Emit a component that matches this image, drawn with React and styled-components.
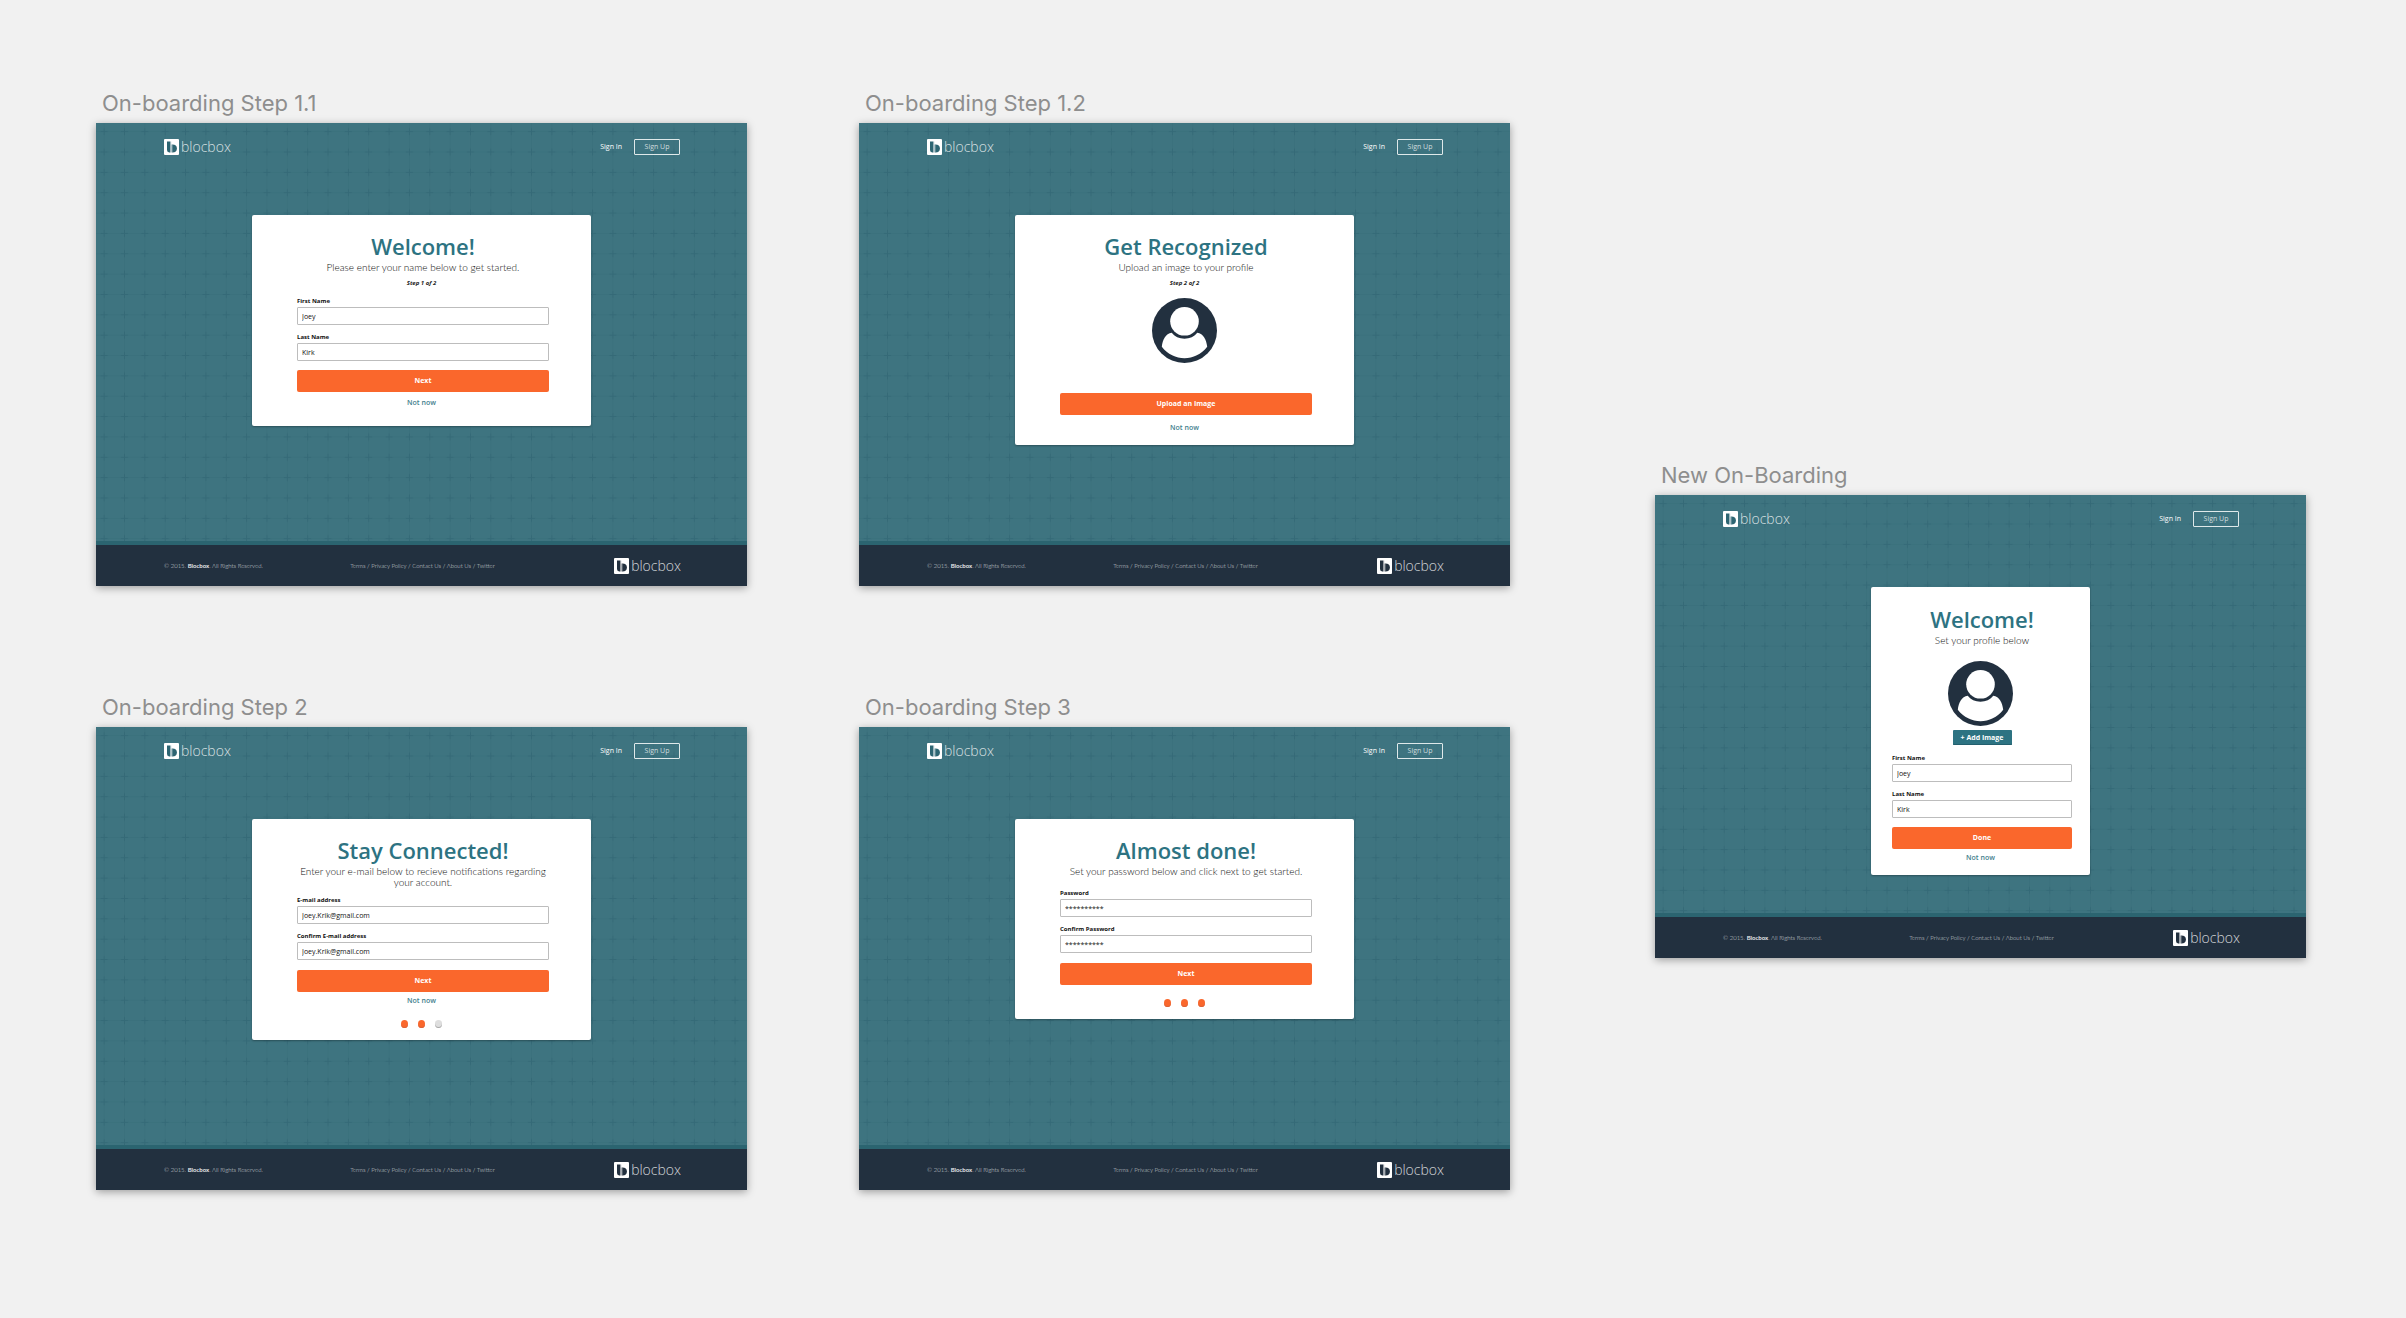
import React, { useId } from "react";
import styled, { createGlobalStyle } from "styled-components";

const open = '"Open Sans", "Noto Sans", sans-serif';
const light = 'Lato, "Open Sans", sans-serif';
const teal = "#2d7382";
const navy = "#22303f";
const orange = "#fa672c";

const Global = createGlobalStyle`
  *, *::before, *::after { box-sizing: border-box; }
  body { margin: 0; background: #f1f1f1; font-family: ${open}; }
  h1, h2, p { margin: 0; }
  a { color: inherit; text-decoration: none; }
  button, input { font: inherit; margin: 0; }
`;

const Canvas = styled.main`
  display: grid;
  grid-template-columns: 1fr 112px 1fr 145px 1fr;
  row-gap: 106px;
  padding: 88px 100px 127px 96px;
`;

const Board = styled.section`
  grid-column: ${(p) => p.$column};
  grid-row: ${(p) => p.$row};
  min-width: 0;
  margin-top: ${(p) => (p.$lowered ? "372px" : "0")};
`;

const BoardTitle = styled.h1`
  margin-bottom: 5px;
  padding-left: 6px;
  font: 400 22px/30px Inter, sans-serif;
  color: #8e8e8e;
`;

const Artboard = styled.div`
  position: relative;
  display: flex;
  flex-direction: column;
  min-height: 463px;
  background: #3e7480;
  box-shadow: 0 2px 8px rgba(0, 0, 0, 0.35);
`;

const PatternLayer = styled.svg`
  position: absolute;
  inset: 0;
  width: 100%;
  height: 100%;
`;

const TopBar = styled.header`
  position: relative;
  display: flex;
  justify-content: space-between;
  align-items: center;
  padding: 16px 67px 0 68px;
`;

const Brand = styled.a`
  display: flex;
  align-items: center;
  gap: 2px;
  height: 16px;
  font: 300 14px/16px ${open};
  color: rgba(255, 255, 255, 0.8);

  svg {
    width: 15px;
    height: 16px;
  }
`;

const Account = styled.nav`
  display: flex;
  align-items: center;
  gap: 12px;
  font: 400 7px/14px ${open};
  color: #fff;
`;

const SignUp = styled.button`
  width: 46px;
  height: 16px;
  padding: 0;
  border: 1px solid #dfe9ea;
  border-radius: 1px;
  background: transparent;
  color: #d0dddf;
  font-weight: 400;
`;

const Stage = styled.div`
  position: relative;
  display: flex;
  flex: 1;
  justify-content: center;
  align-items: flex-start;
  padding: 60px 20px 20px;
`;

const Card = styled.form`
  display: flex;
  flex-direction: column;
  width: ${(p) => (p.$narrow ? "219px" : "339px")};
  padding: ${(p) => (p.$narrow ? "19px 18px 12px 21px" : "18px 42px 12px 45px")};
  padding-bottom: ${(p) => (p.$roomy ? "18px" : "12px")};
  border-radius: 2px;
  background: #fff;
  box-shadow: 0 1px 2px rgba(0, 0, 0, 0.3);
`;

const Heading = styled.h2`
  font: 600 22px/26px ${open};
  color: ${teal};
  text-align: center;
`;

const Lead = styled.p`
  margin-top: 3px;
  font: 300 10px/11px ${light};
  color: #111;
  text-align: center;
`;

const StepNote = styled.p`
  margin: 6px 3px 0 0;
  font: italic 700 6px/8px ${open};
  color: #222;
  text-align: center;
`;

const Fields = styled.div`
  display: flex;
  flex-direction: column;
  gap: 8px;
  margin-top: ${(p) => p.$top};
`;

const Field = styled.div`
  display: flex;
  flex-direction: column;
  gap: 2px;
`;

const Label = styled.label`
  font: 700 6px/8px ${open};
  color: #111;
`;

const TextBox = styled.input`
  width: 100%;
  height: 18px;
  padding: 0 4px;
  border: 1px solid #bdbdbd;
  border-radius: 1px;
  background: #fff;
  font: 400 7px/16px ${open};
  color: #111;
`;

const Primary = styled.button`
  height: 22px;
  margin-top: ${(p) => p.$top};
  padding: 0;
  border: 0;
  border-radius: 2px;
  background: ${orange};
  font: 700 7px/22px ${open};
  color: #fff;
`;

const AddImage = styled.button`
  align-self: center;
  width: 59px;
  height: 15px;
  margin-top: 4px;
  padding: 0;
  border: 0;
  border-radius: 1px;
  background: ${teal};
  box-shadow: inset 0 -1px 0 #235f6e;
  font: 700 7px/15px ${open};
  color: #fff;
`;

const Skip = styled.a`
  align-self: center;
  margin: ${(p) => p.$top} 3px 0 0;
  font: 600 7px/10px ${open};

  && {
    color: #43808d;
  }
`;

const Avatar = styled.svg`
  align-self: center;
  width: 65px;
  height: 65px;
  margin: ${(p) => p.$top} 3px 0 0;
`;

const Dots = styled.div`
  display: flex;
  justify-content: center;
  gap: 10px;
  margin: 14px 3px 0 0;
`;

const Dot = styled.span`
  width: 7px;
  height: 8px;
  border-radius: 50%;
  background: ${(p) => (p.$done ? orange : "#dedede")};
  box-shadow: inset 0 -1px 0 ${(p) => (p.$done ? "#d9633a" : "#a8a8a8")};
`;

const Footer = styled.footer`
  position: relative;
  display: grid;
  grid-template-columns: 1fr auto 1fr;
  align-items: center;
  height: 45px;
  padding: 0 66px 0 68px;
  border-top: 4px solid #2b6470;
  background: ${navy};
  font: 300 6px/8px ${light};
  color: #d4d8dc;

  ${Brand} {
    justify-self: end;
  }

  b {
    font-weight: 700;
    color: #e4e6e8;
  }
`;

function Grid() {
  const id = useId();
  return (
    <PatternLayer viewBox="0 0 1280 910" preserveAspectRatio="xMinYMin slice" aria-hidden="true">
      <defs>
        <pattern id={id} x="-4" y="-3" width="40" height="40" patternUnits="userSpaceOnUse">
          <path d="M20 0V40M0 20H40" stroke="#2c6271" strokeOpacity="0.18" strokeWidth="2" />
          <path d="M20 13V27M13 20H27" stroke="#2a5d6c" strokeOpacity="0.36" strokeWidth="2" />
        </pattern>
      </defs>
      <rect width="1280" height="910" fill={`url(#${id})`} />
    </PatternLayer>
  );
}

function Logo({ ink }) {
  return (
    <Brand href="#">
      <svg viewBox="0 0 15 16" aria-hidden="true">
        <rect width="15" height="16" rx="1" fill="#fff" />
        <path d="M3 2.4H6.2V13.6H5.2Q3 13.2 3 11Z" fill={ink} />
        <path d="M6.2 2.4H7.2V5.5H9V13.6H6.2Z" fill={ink} opacity="0.4" />
        <path d="M8.4 5.4Q12.9 5.4 12.9 9.5T8.4 13.6Z" fill={ink} />
      </svg>
      blocbox
    </Brand>
  );
}

function Person({ top }) {
  return (
    <Avatar $top={top} viewBox="0 0 65 65" role="img" aria-label="Profile picture">
      <circle cx="32.5" cy="32.5" r="32.5" fill={navy} />
      <circle cx="32.5" cy="23.3" r="14.3" fill="#fff" />
      <path
        d="M19.8 34.8C25 42.6 40 42.6 45.2 34.8C51.5 35.4 54.4 42 55.2 48.8C43.5 64 21.5 64 9.8 48.8C10.6 42 13.5 35.4 19.8 34.8Z"
        fill="#fff"
      />
    </Avatar>
  );
}

function Entry({ label, value }) {
  const id = useId();
  return (
    <Field>
      <Label htmlFor={id}>{label}</Label>
      <TextBox id={id} type="text" defaultValue={value} />
    </Field>
  );
}

function Entries({ top, items }) {
  return (
    <Fields $top={top}>
      {items.map(([label, value]) => (
        <Entry key={label} label={label} value={value} />
      ))}
    </Fields>
  );
}

function Progress({ done }) {
  return (
    <Dots role="img" aria-label={`${done} / 3`}>
      {[1, 2, 3].map((n) => (
        <Dot key={n} $done={n <= done} />
      ))}
    </Dots>
  );
}

function Screen({ title, column, row, lowered, children }) {
  return (
    <Board $column={column} $row={row} $lowered={lowered}>
      <BoardTitle>{title}</BoardTitle>
      <Artboard>
        <Grid />
        <TopBar>
          <Logo ink="#2d6572" />
          <Account>
            <a href="#">Sign In</a>
            <SignUp type="button">Sign Up</SignUp>
          </Account>
        </TopBar>
        <Stage>{children}</Stage>
        <Footer>
          <span>
            © 2015. <b>Blocbox</b>. All Rights Reserved.
          </span>
          <nav>
            <a href="#">Terms</a> / <a href="#">Privacy Policy</a> / <a href="#">Contact Us</a> /{" "}
            <a href="#">About Us</a> / <a href="#">Twitter</a>
          </nav>
          <Logo ink={navy} />
        </Footer>
      </Artboard>
    </Board>
  );
}

const names = [
  ["First Name", "Joey"],
  ["Last Name", "Kirk"],
];
const emails = [
  ["E-mail address", "Joey.Krik@gmail.com"],
  ["Confirm E-mail address", "Joey.Krik@gmail.com"],
];
const passwords = [
  ["Password", "**********"],
  ["Confirm Password", "**********"],
];

export default function App() {
  return (
    <>
      <Global />
      <Canvas>
        <Screen title="On-boarding Step 1.1" column="1" row="1">
          <Card $roomy>
            <Heading>Welcome!</Heading>
            <Lead>Please enter your name below to get started.</Lead>
            <StepNote>Step 1 of 2</StepNote>
            <Entries top="10px" items={names} />
            <Primary type="button" $top="9px">Next</Primary>
            <Skip href="#" $top="6px">Not now</Skip>
          </Card>
        </Screen>

        <Screen title="On-boarding Step 1.2" column="3" row="1">
          <Card>
            <Heading>Get Recognized</Heading>
            <Lead>Upload an image to your profile</Lead>
            <StepNote>Step 2 of 2</StepNote>
            <Person top="11px" />
            <Primary type="button" $top="30px">Upload an Image</Primary>
            <Skip href="#" $top="8px">Not now</Skip>
          </Card>
        </Screen>

        <Screen title="On-boarding Step 2" column="1" row="2">
          <Card>
            <Heading>Stay Connected!</Heading>
            <Lead>Enter your e-mail below to recieve notifications regarding your account.</Lead>
            <Entries top="8px" items={emails} />
            <Primary type="button" $top="10px">Next</Primary>
            <Skip href="#" $top="4px">Not now</Skip>
            <Progress done={2} />
          </Card>
        </Screen>

        <Screen title="On-boarding Step 3" column="3" row="2">
          <Card>
            <Heading>Almost done!</Heading>
            <Lead>Set your password below and click next to get started.</Lead>
            <Entries top="12px" items={passwords} />
            <Primary type="button" $top="10px">Next</Primary>
            <Progress done={3} />
          </Card>
        </Screen>

        <Screen title="New On-Boarding" column="5" row="1 / span 2" lowered>
          <Card $narrow>
            <Heading>Welcome!</Heading>
            <Lead>Set your profile below</Lead>
            <Person top="15px" />
            <AddImage type="button">+ Add Image</AddImage>
            <Entries top="9px" items={names} />
            <Primary type="button" $top="9px">Done</Primary>
            <Skip href="#" $top="4px">Not now</Skip>
          </Card>
        </Screen>
      </Canvas>
    </>
  );
}
